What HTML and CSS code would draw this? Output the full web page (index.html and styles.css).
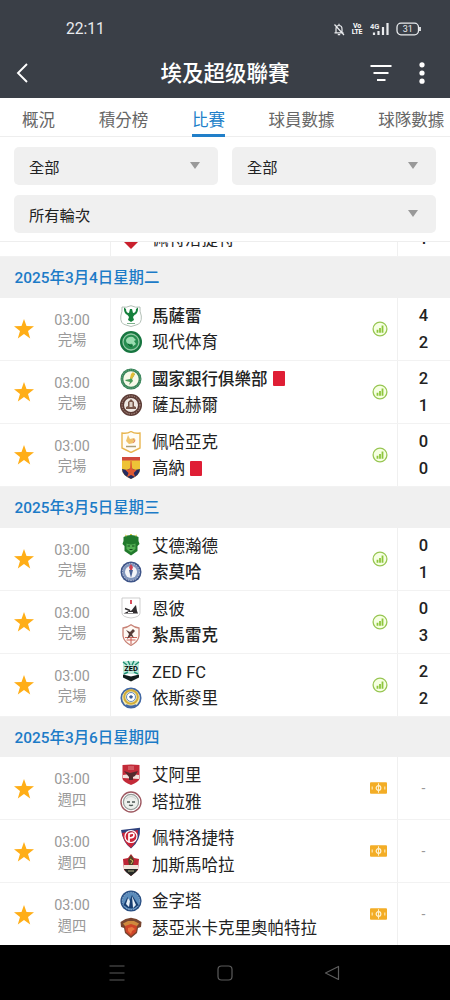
FILE: index.html
```html
<!DOCTYPE html>
<html lang="zh-Hant">
<head>
  <meta charset="UTF-8">
  <meta name="viewport" content="width=device-width, initial-scale=1.0">
  <title>埃及超级聯賽</title>
  <link rel="stylesheet" href="styles.css">
</head>
<body>

  <!-- Shared icons -->
  <svg class="sprite">
    <symbol id="star" viewBox="0 0 20 20"><path d="M10 0l2.500 7 7.500.2-6 4.800 2.200 7.400L10 15l-6.200 4.400L6 12 0 7.200 7.500 7z" fill="#ffae17"/></symbol>
    <symbol id="stats" viewBox="0 0 16 16"><circle cx="8" cy="8" r="6.900" fill="#f6ffe3" stroke="#98c653" stroke-width="1.300"/><path d="M5.500 8.700v3M8 7v4.700M10.500 4.500v7.200" stroke="#8dc63c" stroke-width="1.800"/></symbol>
    <symbol id="pitch" viewBox="0 0 18 12"><rect width="18" height="12" rx="1" fill="#f3ad26"/><circle cx="9" cy="6" r="2.500" fill="none" stroke="#fff4d8" stroke-width="1.200"/><path d="M9 1v10M2.300 4.500v3M15.700 4.500v3" stroke="#fff0c8" stroke-width="1.100"/></symbol>
  </svg>

  <div class="header">
    <div class="statusbar">
      <span class="clock">22:11</span>
      <div class="status-icons">
        <svg class="bell" width="12" height="13" viewBox="0 0 12 13" fill="none" stroke="#e9ebee" stroke-width="1.200"><path d="M1.500 9.800h9M3 9.500V6Q3 2.500 6 2.500T9 6v3.500M6 .8v1.500M4.800 11.700h2.400M1.500 1.500l9.500 10.500"/></svg>
        <div class="volte"><span>Vo</span><span>LTE</span></div>
        <svg class="signal" width="20" height="14" viewBox="0 0 20 14"><text x="0" y="6.500" class="net">4G</text><path d="M4 10.500V13M8.500 9V13M13 5V13M17.500 1V13" stroke="#e9ebee" stroke-width="2.200"/></svg>
        <svg width="26" height="14" viewBox="0 0 26 14"><rect x="1" y="1.200" width="21.500" height="11.600" rx="4" fill="none" stroke="#e9ebee" stroke-width="1.300"/><path d="M24 5v4" stroke="#e9ebee" stroke-width="1.800"/><text x="11.700" y="10.300" class="level">31</text></svg>
      </div>
    </div>
    <div class="titlebar">
      <svg class="back" width="14" height="20" viewBox="0 0 14 20"><path d="M12 1L3 10l9 9" fill="none" stroke="#fff" stroke-width="1.900"/></svg>
      <h1>埃及超级聯賽</h1>
      <svg class="filter" width="22" height="18" viewBox="0 0 22 18"><path d="M.5 2h21M3.500 9h15M7 16h8.500" stroke="#fff" stroke-width="1.900"/></svg>
      <svg class="more" width="6" height="22" viewBox="0 0 6 22" fill="#fff"><circle cx="3" cy="2.800" r="2.600"/><circle cx="3" cy="11" r="2.600"/><circle cx="3" cy="19.200" r="2.600"/></svg>
    </div>
  </div>

  <div class="tabs">
    <a>概況</a>
    <a>積分榜</a>
    <a class="active">比賽</a>
    <a>球員數據</a>
    <a>球隊數據</a>
  </div>

  <div class="filters">
    <div class="select">全部</div>
    <div class="select">全部</div>
    <div class="select wide">所有輪次</div>
  </div>

  <div class="matches">
    <div class="clipped">
      <div class="match">
        <div class="fav"></div>
        <div class="time"></div>
        <div class="teams">
          <div class="team"></div>
          <div class="team"><svg class="crest" viewBox="0 0 22 22"><path d="M2 3L20 1l-1 12-8 8-8-8z" fill="#c9202d"/></svg><span>佩特洛捷特</span></div>
        </div>
        <div class="info"></div>
        <div class="score"><span>&nbsp;</span><span>1</span></div>
      </div>
    </div>

    <div class="date">2025年3月4日星期二</div>
    <div class="match">
      <div class="fav"><svg><use href="#star"/></svg></div>
      <div class="time"><span>03:00</span><span>完場</span></div>
      <div class="teams">
        <div class="team"><svg class="crest" viewBox="0 0 22 22"><path d="M2 2Q6 3 11 .7 16 3 20 2q-.5 4 1.300 9Q22 19 16 20l-5 1.500L6 20Q0 19 .8 11 2.500 6 2 2z" fill="#fff" stroke="#a9b8ae" stroke-width=".9"/><path d="M4 2.500q-.5 6 3.500 7.500L9 12l-1 3 3 2 3-2-1-3 1.500-2q4-1.500 3.500-7.500l-2 1.500q0 4-3 4L12 4h-2L9 8Q6 8 6 4z" fill="#15803c"/><path d="M7 18.500h8" stroke="#7fb28d"/></svg><b>馬薩雷</b></div>
        <div class="team"><svg class="crest" viewBox="0 0 22 22"><circle cx="11" cy="11" r="11" fill="#16753f"/><circle cx="11" cy="11" r="8" fill="#278d50" stroke="#92c8a4" stroke-width="1.300"/><path d="M6 9q2-4 7-3l3 3-2 1 2 3-4 3q2-4-2-3-4 0-4-4z" fill="#9bdcb1"/><path d="M8 13q2 3 5 2" stroke="#0f5a2c" fill="none"/></svg><span>现代体育</span></div>
      </div>
      <div class="info"><svg class="stats"><use href="#stats"/></svg></div>
      <div class="score"><span>4</span><span>2</span></div>
    </div>
    <div class="match">
      <div class="fav"><svg><use href="#star"/></svg></div>
      <div class="time"><span>03:00</span><span>完場</span></div>
      <div class="teams">
        <div class="team"><svg class="crest" viewBox="0 0 22 22"><circle cx="11" cy="11" r="10.500" fill="#368257"/><circle cx="11" cy="11" r="9.200" fill="none" stroke="#8bbd9c" stroke-width=".7" stroke-dasharray="1 1"/><circle cx="11" cy="11" r="7.700" fill="#f7f8e8"/><path d="M5 12l5-1 3-6 2 1-3 5 1 2-4 4 1-3-4-1z" fill="#4b9b5a"/><path d="M11 6l2-2 2 2-3 5-2-1z" fill="#e1bd37"/></svg><b>國家銀行俱樂部</b><i class="red-card"></i></div>
        <div class="team"><svg class="crest" viewBox="0 0 22 22"><circle cx="11" cy="11" r="11" fill="#5b3a34"/><circle cx="11" cy="11" r="9" fill="none" stroke="#b79b91" stroke-dasharray="1.500 1"/><circle cx="11" cy="11" r="7" fill="#efe9e4"/><path d="M6 13l2-1V8l3-3 3 3v4l2 1v2H6z" fill="#77564a"/><path d="M9.500 8h3v5h-3z" fill="#ddd0c6"/></svg><span>薩瓦赫爾</span></div>
      </div>
      <div class="info"><svg class="stats"><use href="#stats"/></svg></div>
      <div class="score"><span>2</span><span>1</span></div>
    </div>
    <div class="match">
      <div class="fav"><svg><use href="#star"/></svg></div>
      <div class="time"><span>03:00</span><span>完場</span></div>
      <div class="teams">
        <div class="team"><svg class="crest" viewBox="0 0 22 22"><path d="M2 2q5 1 9-1.500Q15 3 20 2v15l-9 4.500L2 17z" fill="#fffdf6" stroke="#e8b650" stroke-width="1.400"/><path d="M8 4l2 4 4-1q3 2 0 5l-5 1-3-3z" fill="#efc36b"/><path d="M13 8l2 2-2 2" stroke="#e58a78" fill="none"/><path d="M6 15.500h10" stroke="#ac9e75" stroke-width="1.500"/></svg><span>佩哈亞克</span></div>
        <div class="team"><svg class="crest" viewBox="0 0 22 22"><path d="M2 0h18v13q0 5-9 9-9-4-9-9z" fill="#eec337"/><path d="M2 0h18v3.500H2z" fill="#d0493c"/><path d="M2 12l5 1 4-2 4 2 5-1q0 6-9 10-9-4-9-10z" fill="#252c61"/><path d="M10.500 4h1l.7 8 4.500 1-3 3 1.500 4-4.200-2L7 20l1.500-4-3-3 4.500-1z" fill="#e05a31"/></svg><span>高納</span><i class="red-card"></i></div>
      </div>
      <div class="info"><svg class="stats"><use href="#stats"/></svg></div>
      <div class="score"><span>0</span><span>0</span></div>
    </div>

    <div class="date">2025年3月5日星期三</div>
    <div class="match">
      <div class="fav"><svg><use href="#star"/></svg></div>
      <div class="time"><span>03:00</span><span>完場</span></div>
      <div class="teams">
        <div class="team"><svg class="crest" viewBox="0 0 22 22"><path d="M3.500 3Q11-1 18.500 3v4l1 3-2 2v5L11 21.500 4.500 17v-5l-2-2 1-3z" fill="#21792c"/><path d="M5 1l2 1M10 .5h2M15 2l2-1" stroke="#d0ca4b"/><path d="M6.500 9.500q4.500 2 9 0V15L11 18.500 6.500 15z" fill="#54af54"/><path d="M7.500 12H10M12 12h2.500M9.500 15.500h3" stroke="#124c1d"/></svg><span>艾德瀚德</span></div>
        <div class="team"><svg class="crest" viewBox="0 0 22 22"><circle cx="11" cy="11" r="10.500" fill="#3e5488"/><circle cx="11" cy="11" r="8.500" fill="#8296bd" stroke="#c3cce0" stroke-dasharray="1.500 1"/><circle cx="11" cy="11" r="6" fill="#f3f4f8"/><path d="M9 9l2 8 2-8z" fill="#4b6296"/><path d="M11 3l2 3-1 3h-2L9 6z" fill="#ce4254"/></svg><b>索莫哈</b></div>
      </div>
      <div class="info"><svg class="stats"><use href="#stats"/></svg></div>
      <div class="score"><span>0</span><span>1</span></div>
    </div>
    <div class="match">
      <div class="fav"><svg><use href="#star"/></svg></div>
      <div class="time"><span>03:00</span><span>完場</span></div>
      <div class="teams">
        <div class="team"><svg class="crest" viewBox="0 0 22 22"><path d="M2 1h18v15q0 4-9 5-9-1-9-5z" fill="#fff" stroke="#b9b9b9" stroke-width=".7"/><path d="M3.500 16.500l4-2 4-1L15 9l1-1 1 6 1 2.500z" fill="#302d2f"/><path d="M5 11.500l5 2" stroke="#302d2f" stroke-width="1.500"/><path d="M8 15.500h5" stroke="#fff"/><path d="M11 3v4" stroke="#d53a4b" stroke-width="1.800"/></svg><span>恩彼</span></div>
        <div class="team"><svg class="crest" viewBox="0 0 22 22"><path d="M11 .8q4 3 8 3.200v8q-1 6-8 9.300Q4 18 3 12V4q4-.2 8-3.200z" fill="#fff9f4" stroke="#c88276" stroke-width="1.300"/><path d="M5 13.500h12M6.500 16h9" stroke="#d0655b" stroke-width="1.200"/><path d="M6 6l4 2 3-3 2 2-3 3 2 4-3-2-4 3 2-5z" fill="#573c38"/><path d="M11 14v6" stroke="#c5564f"/></svg><b>紮馬雷克</b></div>
      </div>
      <div class="info"><svg class="stats"><use href="#stats"/></svg></div>
      <div class="score"><span>0</span><span>3</span></div>
    </div>
    <div class="match">
      <div class="fav"><svg><use href="#star"/></svg></div>
      <div class="time"><span>03:00</span><span>完場</span></div>
      <div class="teams">
        <div class="team"><svg class="crest" viewBox="0 0 22 22"><path d="M3 1h16v13H3z" fill="#c1eadb"/><path d="M3 2l4 3M8 1l2 4M14 1l-2 4M19 2l-4 3M4 14l4-2M18 14l-4-2" stroke="#208e73" stroke-width="1.500"/><path d="M3 14.500l8 2 8-2v3l-8 4-8-4z" fill="#111d1c"/><text x="11" y="11.300" class="zed">ZED</text></svg><span>ZED FC</span></div>
        <div class="team"><svg class="crest" viewBox="0 0 22 22"><circle cx="11" cy="11" r="9.700" fill="#f7edb8" stroke="#4268a4" stroke-width="1.700"/><circle cx="11" cy="10" r="6.800" fill="#e9e8ca" stroke="#d1ac37" stroke-width="2"/><circle cx="11" cy="10" r="4.500" fill="#fff" stroke="#658abb"/><path d="M11 8l2 1.500-1 2h-2l-1-2z" fill="#3c5e94"/><path d="M6 18q5 3 10 0" stroke="#4268a4" stroke-width="2" fill="none"/></svg><span>依斯麥里</span></div>
      </div>
      <div class="info"><svg class="stats"><use href="#stats"/></svg></div>
      <div class="score"><span>2</span><span>2</span></div>
    </div>

    <div class="date">2025年3月6日星期四</div>
    <div class="match">
      <div class="fav"><svg><use href="#star"/></svg></div>
      <div class="time"><span>03:00</span><span>週四</span></div>
      <div class="teams">
        <div class="team"><svg class="crest" viewBox="0 0 22 22"><path d="M2.500 1q8.500-1 17 0v14q-1 3-8.500 6-7.500-3-8.500-6z" fill="#c32a38"/><path d="M3 11l7-1 9 1v4L3 14z" fill="#f2e1dc"/><path d="M4 7l6 2 8-2-3 5-2 1v3h-4v-3z" fill="#532a2c"/><path d="M8 3h6M8 5h6" stroke="#e08589"/></svg><span>艾阿里</span></div>
        <div class="team"><svg class="crest" viewBox="0 0 22 22"><circle cx="11" cy="11" r="10" fill="#fff" stroke="#9e5961" stroke-width="1.400"/><circle cx="11" cy="11" r="7.600" fill="#eef0ed" stroke="#959c99" stroke-width="1.200"/><path d="M6 8q5-5 10 0" fill="none" stroke="#ccd0ce"/><path d="M7 11h3M12 11h3M9 14q2 1 4 0" stroke="#4c5754" stroke-width="1.300" fill="none"/></svg><span>塔拉雅</span></div>
      </div>
      <div class="info"><svg class="pitch"><use href="#pitch"/></svg></div>
      <div class="score none">-</div>
    </div>
    <div class="match">
      <div class="fav"><svg><use href="#star"/></svg></div>
      <div class="time"><span>03:00</span><span>週四</span></div>
      <div class="teams">
        <div class="team"><svg class="crest" viewBox="0 0 22 22"><path d="M1 3L20 .7q1 13-9 20.800Q3 16 1 3z" fill="#2f417d"/><path d="M2 6l16-3q0 11-7 18-7-5-9-15z" fill="#cc2539"/><circle cx="11" cy="9.500" r="6" fill="none" stroke="#fff" stroke-width="1.200"/><path d="M9 15V7q5-2 5 1t-5 3" fill="none" stroke="#fff" stroke-width="1.700"/></svg><span>佩特洛捷特</span></div>
        <div class="team"><svg class="crest" viewBox="0 0 22 22"><path d="M11 0l3 4 5 1-1 11-7 6-7-6L3 5l5-1z" fill="#bd2535"/><path d="M4 11h14v4H4z" fill="#eee5da"/><path d="M4 15h14l-2 3-5 4-5-4z" fill="#252825"/><path d="M11 1l3 5-1 5H9L8 6z" fill="#514525"/><path d="M10 5l3 2-2 3" stroke="#d3b760" fill="none"/><path d="M8 17h6" stroke="#b2ad83"/></svg><span>加斯馬哈拉</span></div>
      </div>
      <div class="info"><svg class="pitch"><use href="#pitch"/></svg></div>
      <div class="score none">-</div>
    </div>
    <div class="match">
      <div class="fav"><svg><use href="#star"/></svg></div>
      <div class="time"><span>03:00</span><span>週四</span></div>
      <div class="teams">
        <div class="team"><svg class="crest" viewBox="0 0 22 22"><circle cx="11" cy="11" r="10.600" fill="#284f83"/><circle cx="11" cy="11" r="8.700" fill="#5c8dbc" stroke="#91afd0" stroke-dasharray="1.500 1"/><path d="M3.500 15l4-8 2 4 2.500-6 6.500 10q-7 7-15 0z" fill="#173d70"/><path d="M8 8l2 3-1 6-3-3zM12 6l4 9-3 3z" fill="#e6eff7"/></svg><span>金字塔</span></div>
        <div class="team"><svg class="crest" viewBox="0 0 22 22"><path d="M.5 5l5-3L11 .8 16.500 2l5 3-.5 5-3 1-1 5-6 5-6-5-1-5-3-1z" fill="#78452f"/><path d="M3 6.500L8 4h6l5 2.500L17 9H5z" fill="#cf8a3d"/><path d="M5 9l6-2 6 2-1 6-5 4-5-4z" fill="#cf4528"/><path d="M8 11l4-1 3 2-3 2-1 3-3-3z" fill="#e8763f"/></svg><span>瑟亞米卡克里奧帕特拉</span></div>
      </div>
      <div class="info"><svg class="pitch"><use href="#pitch"/></svg></div>
      <div class="score none">-</div>
    </div>
  </div>

  <div class="navbar">
    <svg width="18" height="18" viewBox="0 0 18 18"><path d="M1.500 2h15M1.500 9h15M1.500 16h15"/></svg>
    <svg width="18" height="18" viewBox="0 0 18 18"><rect x="2" y="2" width="14" height="14" rx="3.500"/></svg>
    <svg width="18" height="18" viewBox="0 0 18 18"><path d="M15.500 2.500v13L2.500 9z" stroke-linejoin="round"/></svg>
  </div>

</body>
</html>
```

FILE: styles.css
```css
* {
  box-sizing: border-box;
}

body {
  margin: 0;
  height: 1000px;
  display: flex;
  flex-direction: column;
  overflow: hidden;
  background-color: #fff;
  color: #222;
  font-family: Roboto, "Noto Sans CJK TC", sans-serif;
}

svg {
  display: block;
  flex: none;
}

.sprite {
  width: 0;
  height: 0;
  position: absolute;
}

/* Header */
.header {
  height: 98px;
  flex: none;
  background-color: #3a3f47;
  color: #fff;
}

.statusbar {
  height: 48px;
  padding: 10px 28px 0 66px;
  display: flex;
  justify-content: space-between;
  align-items: center;
}

.clock {
  font-size: 15.6px;
  color: #e9ebee;
}

.status-icons {
  display: flex;
  align-items: center;
}

.bell {
  margin-right: 7px;
}

.volte {
  width: 10px;
  margin-right: 8px;
  font-size: 7px;
  font-weight: bold;
  line-height: 6.5px;
  letter-spacing: -0.3px;
  text-align: center;
  display: flex;
  flex-direction: column;
  align-items: center;
}

.signal {
  margin-right: 6px;
}

.net {
  font-size: 7.5px;
  font-weight: bold;
  fill: #e9ebee;
}

.level {
  font-size: 9px;
  fill: #e9ebee;
  text-anchor: middle;
}

.titlebar {
  height: 50px;
  padding: 0 26px 0 15px;
  display: flex;
  align-items: center;
}

.titlebar h1 {
  flex: 1;
  margin: 0 0 0 51px;
  padding-top: 2px;
  font-size: 21.5px;
  font-weight: 500;
  line-height: 50px;
  text-align: center;
}

.filter {
  margin-right: 27px;
}

.more {
  margin-right: -1px;
}

/* Tabs */
.tabs {
  height: 39px;
  flex: none;
  padding-left: 22px;
  display: flex;
  gap: 43.7px;
  border-bottom: 1px solid #eee;
  white-space: nowrap;
}

.tabs a {
  height: 39px;
  flex: none;
  font-size: 16.5px;
  line-height: 45px;
  color: #666;
}

.tabs .active {
  color: #217fc9;
  border-bottom: 3px solid #217fc9;
}

/* Filters */
.filters {
  height: 105px;
  flex: none;
  padding: 10px 14px 9px;
  display: grid;
  grid-template-columns: 1fr 1fr;
  grid-template-rows: 38px 38px;
  gap: 10px 14px;
  border-bottom: 1px solid #eee;
}

.select {
  padding: 0 18px 1px 15px;
  display: flex;
  align-items: center;
  justify-content: space-between;
  background-color: #f0f0f0;
  border-radius: 5px;
  font-size: 15.3px;
}

.select::after {
  content: "";
  border: 5.5px solid transparent;
  border-top: 7px solid #999;
  border-bottom: 0;
}

.wide {
  grid-column: span 2;
}

/* Match list */
.matches {
  height: 703px;
  flex: none;
  overflow: hidden;
}

.clipped {
  height: 15.3px;
  display: flex;
  flex-direction: column;
  justify-content: flex-end;
  overflow: hidden;
}

.date {
  height: 40.7px;
  padding: 1px 0 0 14.5px;
  background-color: #f0f0f0;
  color: #1c7bc7;
  font-size: 15.4px;
  font-weight: 500;
  line-height: 41.5px;
}

.match {
  height: 63px;
  flex: none;
  display: flex;
  border-bottom: 1px solid #f2f2f2;
}

.fav {
  width: 34px;
  padding: 1px 0 0 14px;
  display: flex;
  align-items: center;
}

.fav svg {
  width: 20px;
  height: 20px;
}

.time {
  width: 77px;
  padding-top: 3px;
  display: flex;
  flex-direction: column;
  justify-content: center;
  border-right: 1px solid #f0f0f0;
  color: #999;
  font-size: 14.3px;
  line-height: 20.5px;
  text-align: center;
}

.teams {
  flex: 1;
  padding-left: 9px;
  display: flex;
  flex-direction: column;
  justify-content: center;
}

.team {
  height: 26.5px;
  display: flex;
  align-items: center;
  font-size: 16.5px;
  line-height: 26.5px;
  white-space: nowrap;
}

.team span,
.team b {
  padding-top: 3px;
}

.team b {
  font-weight: 500;
}

.crest {
  width: 22px;
  height: 22px;
  margin-right: 10px;
}

.zed {
  font-size: 7.5px;
  font-weight: bold;
  text-anchor: middle;
}

.red-card {
  width: 12px;
  height: 15px;
  margin-left: 5px;
  background-color: #df1e35;
  border-radius: 1px;
}

.info {
  width: 36px;
  padding-left: 1px;
  display: flex;
  align-items: center;
  justify-content: center;
}

.stats {
  width: 16px;
  height: 16px;
}

.pitch {
  width: 17px;
  height: 12px;
  margin-right: 3px;
}

.score {
  width: 53px;
  padding: 2px 1px 0 0;
  display: flex;
  flex-direction: column;
  justify-content: center;
  border-left: 1px solid #f0f0f0;
  font-size: 16.5px;
  font-weight: 500;
  line-height: 26.5px;
  text-align: center;
}

.none {
  padding-top: 0;
  color: #999;
  font-size: 14px;
  font-weight: normal;
}

/* Phone navigation */
.navbar {
  flex: 1;
  padding: 0 109px 0 108px;
  display: flex;
  align-items: center;
  justify-content: space-between;
  background-color: #000;
}

.navbar svg {
  fill: none;
  stroke: #5c5c5c;
  stroke-width: 1.2;
}
```
